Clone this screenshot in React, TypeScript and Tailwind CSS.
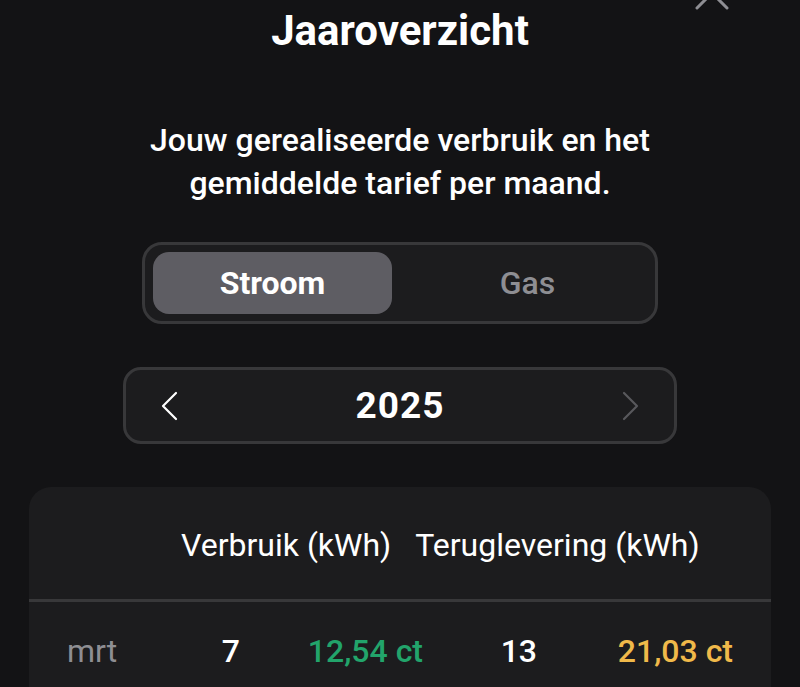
import React from "react";

export default function App() {
  return (
    <div
      className="relative h-[687px] w-[800px] overflow-hidden bg-[#131315] text-white"
      style={{ fontFamily: "Roboto, 'Noto Sans', sans-serif" }}
    >
      <svg
        className="absolute left-[692px] top-[-27px]"
        width="40"
        height="40"
        viewBox="0 0 40 40"
        fill="none"
        stroke="#8e8e93"
        strokeWidth="3"
        strokeLinecap="round"
      >
        <line x1="5" y1="35" x2="35" y2="5" />
        <line x1="35" y1="35" x2="5" y2="5" />
      </svg>

      <div className="flex flex-col items-center">
        <h1 className="mt-[7px] text-[42px] font-bold leading-[48px]">Jaaroverzicht</h1>

        <p className="mt-[64px] text-center text-[32px] font-medium leading-[43px]">
          Jouw gerealiseerde verbruik en het
          <br />
          gemiddelde tarief per maand.
        </p>

        <div className="mt-[37px] grid h-[82px] w-[516px] grid-cols-2 gap-[16px] rounded-[20px] border-[3px] border-[#38383a] bg-[#1c1c1e] px-[8px] py-[7px]">
          <div className="flex items-center justify-center rounded-[16px] bg-[#5e5d63] text-[32px] font-bold">
            Stroom
          </div>
          <div className="flex items-center justify-center text-[32px] font-medium text-[#8e8e93]">
            Gas
          </div>
        </div>

        <div className="mt-[43px] flex h-[77px] w-[554px] items-center justify-between rounded-[18px] border-[3px] border-[#38383a] bg-[#1c1c1e] px-[34px]">
          <svg width="20" height="30" viewBox="0 0 20 30" fill="none" stroke="#ffffff" strokeWidth="2.2" strokeLinecap="round" strokeLinejoin="round">
            <polyline points="16,2 3,15 16,28" />
          </svg>
          <span className="text-[37px] font-bold tracking-[1px]">2025</span>
          <svg width="20" height="30" viewBox="0 0 20 30" fill="none" stroke="#58585c" strokeWidth="2.2" strokeLinecap="round" strokeLinejoin="round">
            <polyline points="4,2 17,15 4,28" />
          </svg>
        </div>

        <div className="mt-[43px] w-[742px] rounded-t-[22px] bg-[#1c1c1e]">
          <div className="flex h-[112px] gap-[24px] pl-[152px] pt-[38px] text-[32px] leading-[40px]">
            <span>Verbruik (kWh)</span>
            <span>Teruglevering (kWh)</span>
          </div>
          <div className="h-[3px] bg-[#38383a]" />
          <div className="grid grid-cols-[83px_90px_183px_114px_196px] px-[38px] pt-[29px] pb-[20px] text-[32px] leading-[40px]">
            <span className="text-[#8e8e93]">mrt</span>
            <span className="text-right font-medium">7</span>
            <span className="text-right font-medium text-[#22a46b]">12,54 ct</span>
            <span className="text-right font-medium">13</span>
            <span className="text-right font-medium text-[#f0b94a]">21,03 ct</span>
          </div>
        </div>
      </div>
    </div>
  );
}
